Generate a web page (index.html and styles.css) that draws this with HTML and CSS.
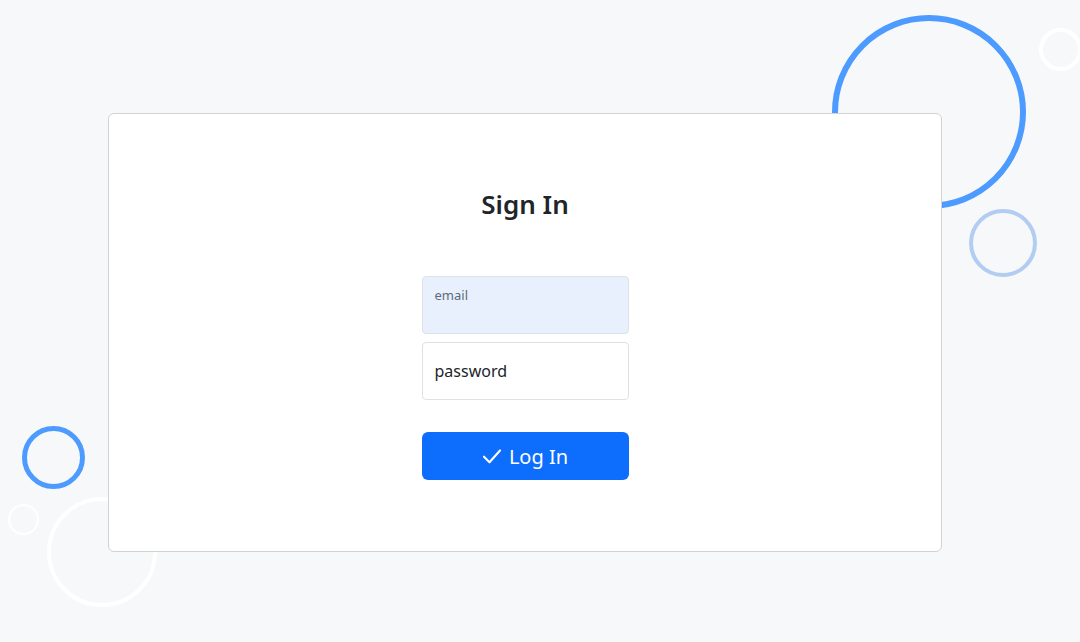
FILE: index.html
```html
<!DOCTYPE html>
<html lang="en">
<head>
  <meta charset="UTF-8" />
  <meta name="viewport" content="width=device-width, initial-scale=1.0"/>
  <title>Sign In</title>
  <link rel="stylesheet" href="styles.css">
</head>
<body>

  <div class="bubbles">
    <span class="bubble b-big"></span>
    <span class="bubble b-corner"></span>
    <span class="bubble b-light"></span>
    <span class="bubble b-left"></span>
    <span class="bubble b-tiny"></span>
    <span class="bubble b-ghost"></span>
  </div>

  <div class="card">
    <h1 class="title">Sign In</h1>

    <form class="form" onsubmit="return false">
      <div class="field filled">
        <label for="email">email</label>
        <input type="email" id="email">
      </div>
      <div class="field">
        <input type="password" id="password" placeholder="password">
      </div>
      <button type="submit" class="btn">
        <svg width="20" height="20" viewBox="0 0 16 16" fill="none" stroke="#fff" stroke-width="1.7" stroke-linecap="round" stroke-linejoin="round"><path d="M1.6 8.6l4.4 4.4 8.4-9.4"/></svg>
        Log In
      </button>
    </form>
  </div>

</body>
</html>
```

FILE: styles.css
```css
* { margin: 0; padding: 0; box-sizing: border-box; }
body {
  font-family: 'Noto Sans', 'Open Sans', sans-serif;
  background: #f7f8fa;
  height: 642px;
  overflow: hidden;
  position: relative;
}
.bubbles {
  position: absolute;
  inset: 0;
  z-index: 0;
}
.bubble {
  position: absolute;
  border-radius: 50%;
  border-style: solid;
}
.b-big { left: 832px; top: 15px; width: 194px; height: 194px; border-width: 6px; border-color: #4d9bff; }
.b-corner { left: 1039px; top: 28px; width: 43px; height: 43px; border-width: 4px; border-color: #fff; }
.b-light { left: 969px; top: 209px; width: 68px; height: 68px; border-width: 4px; border-color: #b2cdf1; }
.b-left { left: 22px; top: 426px; width: 63px; height: 63px; border-width: 5px; border-color: #4d9bff; }
.b-tiny { left: 8px; top: 504px; width: 31px; height: 31px; border-width: 2px; border-color: #fff; }
.b-ghost { left: 47px; top: 497px; width: 110px; height: 110px; border-width: 4px; border-color: #fff; }

.card {
  position: relative;
  z-index: 1;
  margin: 113px 0 0 108px;
  width: 834px;
  height: 439px;
  background: #fff;
  border: 1px solid #d2d2d2;
  border-radius: 6px;
  padding-top: 74px;
  display: flex;
  flex-direction: column;
  align-items: center;
}
.title {
  font-size: 26px;
  font-weight: 600;
  line-height: 32px;
  color: #212529;
}
.form {
  margin-top: 56px;
  width: 207px;
  display: flex;
  flex-direction: column;
  gap: 8px;
}
.field {
  position: relative;
  height: 58px;
}
.field input {
  width: 100%;
  height: 100%;
  border: 1px solid #dee2e6;
  border-radius: 4px;
  padding: 0 12px;
  font-family: inherit;
  font-size: 16px;
  color: #212529;
  background: #fff;
}
.field input::placeholder { color: #212529; }
.field.filled input { background: #e8f0fe; }
.field label {
  position: absolute;
  left: 13px;
  top: 10px;
  font-size: 13px;
  color: #5f6b7a;
}
.btn {
  margin-top: 24px;
  height: 48px;
  background: #0d6efd;
  color: #fff;
  border: none;
  border-radius: 6px;
  font-family: inherit;
  font-size: 20px;
  display: flex;
  align-items: center;
  justify-content: center;
  gap: 7px;
  cursor: pointer;
}
```
